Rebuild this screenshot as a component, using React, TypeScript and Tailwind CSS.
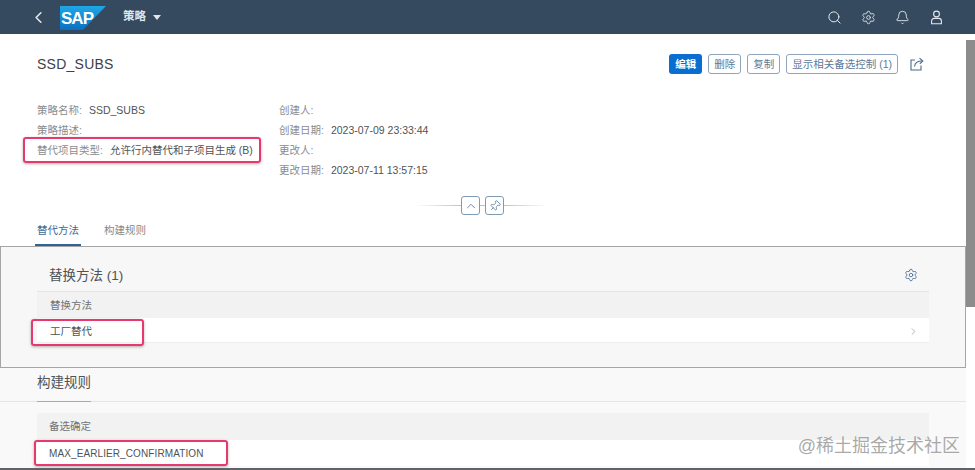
import { Search, Settings, Bell, ChevronLeft, ChevronRight, ChevronUp, Pin } from 'lucide-react';

const font = '[font-family:"Liberation_Sans","Noto_Sans_CJK_SC",sans-serif]';

function SapLogo() {
  return (
    <svg width="46" height="24" viewBox="0 0 46 24">
      <defs>
        <linearGradient id="sapfill" x1="0" y1="0" x2="0" y2="1">
          <stop offset="0" stopColor="#1ea7e6" />
          <stop offset="1" stopColor="#0a6fc2" />
        </linearGradient>
      </defs>
      <polygon points="0,0 46,0 23,24 0,24" fill="url(#sapfill)" />
      <text x="1" y="18" fontSize="17" fontWeight="700" fill="#fff" fontFamily="Liberation Sans" textLength="33">SAP</text>
    </svg>
  );
}

function UserIcon() {
  return (
    <svg width="15" height="15" viewBox="0 0 15 15" fill="none" stroke="currentColor" strokeWidth="1.1">
      <circle cx="7.5" cy="4" r="2.9" />
      <path d="M2.6 13.8V11a2.6 2.6 0 0 1 2.6-2.6h4.6a2.6 2.6 0 0 1 2.6 2.6v2.8z" />
    </svg>
  );
}

function ActionIcon() {
  return (
    <svg width="14" height="14" viewBox="0 0 14 14" fill="none" stroke="#4a6a8c" strokeWidth="1.1">
      <path d="M5 3H1v10h10V8.5" />
      <path d="M4.5 9.5C5 6 7.5 4 12 4" />
      <path d="M9.5 1.2 12.8 4 9.8 6.8" />
    </svg>
  );
}

function OutlineButton({ label }: { label: string }) {
  return (
    <button className="h-5 px-[5px] border border-[#8fa5bd] rounded-[3px] bg-white text-[10.5px] leading-none text-[#5a7a9c] whitespace-nowrap">
      {label}
    </button>
  );
}

function Field({ label, value, highlight }: { label: string; value?: string; highlight?: boolean }) {
  return (
    <div className="relative h-[20px] flex items-center text-[10.5px] whitespace-nowrap">
      <span className="text-[#8a8c8f]">{label}:</span>
      {value && <span className="ml-[7px] text-[#505356]">{value}</span>}
      {highlight && <Mark className="-left-[14px] -top-[4px] w-[238px] h-[26px]" />}
    </div>
  );
}

function Mark({ className }: { className: string }) {
  return <div className={`absolute border-2 border-[#e8386d] rounded-[3px] shadow-[0_1px_3px_rgba(0,0,0,0.3)] ${className}`} />;
}

function Sections() {
  return (
    <>
      <section className="h-[122px] shrink-0 border border-[#a3a5a7] bg-[#f7f7f7] px-[36px] flex flex-col">
        <div className="flex items-center justify-between h-[44px] pt-[14px] pl-[12px] pr-[11px] shrink-0">
          <h2 className="text-[13.5px] text-[#505356]">替换方法 (1)</h2>
          <Settings size={14} strokeWidth={1.4} className="mb-[2px] text-[#3f6a94]" />
        </div>
        <div className="h-[27px] pt-[1px] shrink-0 bg-[#f2f2f2] border-t border-[#e5e5e5] flex items-center pl-[13px] text-[10.5px] text-[#707376]">替换方法</div>
        <div className="relative h-[25px] pt-[3px] shrink-0 bg-white flex items-center justify-between pl-[13px] pr-[10px] text-[10.5px] text-[#505356] border-b border-[#eeeeee]">
          工厂替代
          <ChevronRight size={11} strokeWidth={1.3} className="text-[#7f8285]" />
          <Mark className="-left-[6px] top-[1px] w-[113px] h-[27px]" />
        </div>
      </section>
      <section className="flex-1 min-h-0 bg-[#f9f9f9] flex flex-col">
        <div className="h-[34px] shrink-0 border-b border-[#e5e5e5] pl-[37px]">
          <h2 className="inline-block h-[34px] text-[13.5px] leading-[30px] text-[#505356] border-b border-[#8fb0cc]">构建规则</h2>
        </div>
        <div className="flex-1 px-[37px] pt-[11px] flex flex-col">
          <div className="h-[27px] shrink-0 bg-[#f2f2f2] flex items-center pl-[12px] text-[10.5px] text-[#707376]">备选确定</div>
          <div className="relative h-[26px] shrink-0 bg-white flex items-center pl-[12px] text-[10px] text-[#505356] tracking-[0.1px]">
            MAX_EARLIER_CONFIRMATION
            <Mark className="-left-[3px] top-0 w-[194px] h-[26px]" />
          </div>
        </div>
      </section>
    </>
  );
}

export default function App() {
  return (
    <div className={`${font} relative w-[975px] h-[470px] overflow-hidden bg-white flex flex-col`}>
      <header className="h-[34px] shrink-0 bg-[#354a5f] flex items-center text-white">
        <ChevronLeft size={19} strokeWidth={2} className="ml-[29px] text-[#e4e9ee]" />
        <div className="ml-[12px] mt-[2px]"><SapLogo /></div>
        <span className="ml-[17px] text-[11.5px] font-bold text-[#dfe5ea]">策略</span>
        <span className="ml-[7px] mt-[1px] border-x-[4px] border-x-transparent border-t-[5px] border-t-[#dfe5ea]" />
        <div className="ml-auto mr-[31px] flex items-center gap-[19px] text-[#e4e9ee]">
          <Search size={15} strokeWidth={1.6} />
          <Settings size={15} strokeWidth={1.4} />
          <Bell size={15} strokeWidth={1.4} />
          <UserIcon />
        </div>
      </header>

      <div className="flex-1 flex min-h-0">
        <main className="w-[966px] shrink-0 flex flex-col min-h-0">
          <div className="shrink-0 flex flex-col pl-[37px] pr-[42px]">
            <div className="flex items-center justify-between h-[60px] shrink-0">
              <h1 className="pt-[1px] text-[14px] text-[#3e4245] tracking-[0.25px]">SSD_SUBS</h1>
              <div className="flex items-center gap-[6px]">
                <button className="h-5 px-[6px] rounded-[3px] bg-[#0a6ed1] text-[10.5px] font-bold leading-none text-white">编辑</button>
                <OutlineButton label="删除" />
                <OutlineButton label="复制" />
                <OutlineButton label="显示相关备选控制 (1)" />
                <div className="ml-[6px]"><ActionIcon /></div>
              </div>
            </div>
            <div className="mt-[7px] flex shrink-0">
              <div className="w-[242px]">
                <Field label="策略名称" value="SSD_SUBS" />
                <Field label="策略描述" />
                <Field label="替代项目类型" value="允许行内替代和子项目生成 (B)" highlight />
              </div>
              <div>
                <Field label="创建人" />
                <Field label="创建日期" value="2023-07-09 23:33:44" />
                <Field label="更改人" />
                <Field label="更改日期" value="2023-07-11 13:57:15" />
              </div>
            </div>
            <div className="mt-[15px] ml-[2px] flex items-center justify-center shrink-0">
              <div className="w-[46px] h-px bg-gradient-to-r from-transparent to-[#b5c4d4]" />
              <button className="w-[19px] h-[19px] border border-[#7f9ab5] rounded-[3px] flex items-center justify-center">
                <ChevronUp size={14} strokeWidth={1.3} className="text-[#3f6a94]" />
              </button>
              <div className="w-[5px] h-px bg-[#b5c4d4]" />
              <button className="w-[19px] h-[19px] border border-[#7f9ab5] rounded-[3px] flex items-center justify-center">
                <Pin size={12} strokeWidth={1.4} className="text-[#3f6a94] rotate-45" />
              </button>
              <div className="w-[44px] h-px bg-gradient-to-l from-transparent to-[#b5c4d4]" />
            </div>
          </div>

          <nav className="h-[31px] shrink-0 pl-[37px] flex gap-[25px] text-[10.5px]">
            <div className="w-[42px] relative pt-[8px] text-[#3f6a94] whitespace-nowrap">
              替代方法
              <div className="absolute -left-[2px] -right-[2px] bottom-0 h-[2px] bg-[#2e6496]" />
            </div>
            <div className="pt-[8px] text-[#85878a] whitespace-nowrap">构建规则</div>
          </nav>

          <Sections />
        </main>
        <div className="flex-1 bg-white pt-[6px]">
          <div className="h-[267px] bg-[#8c8c8c]" />
        </div>
      </div>

      <div className="absolute right-[15px] bottom-[15px] text-[18px] leading-none text-[#8d8d8d]/75">@稀土掘金技术社区</div>
      <div className="absolute left-0 right-0 bottom-0 h-[2px] bg-[#5f6266]" />
    </div>
  );
}
